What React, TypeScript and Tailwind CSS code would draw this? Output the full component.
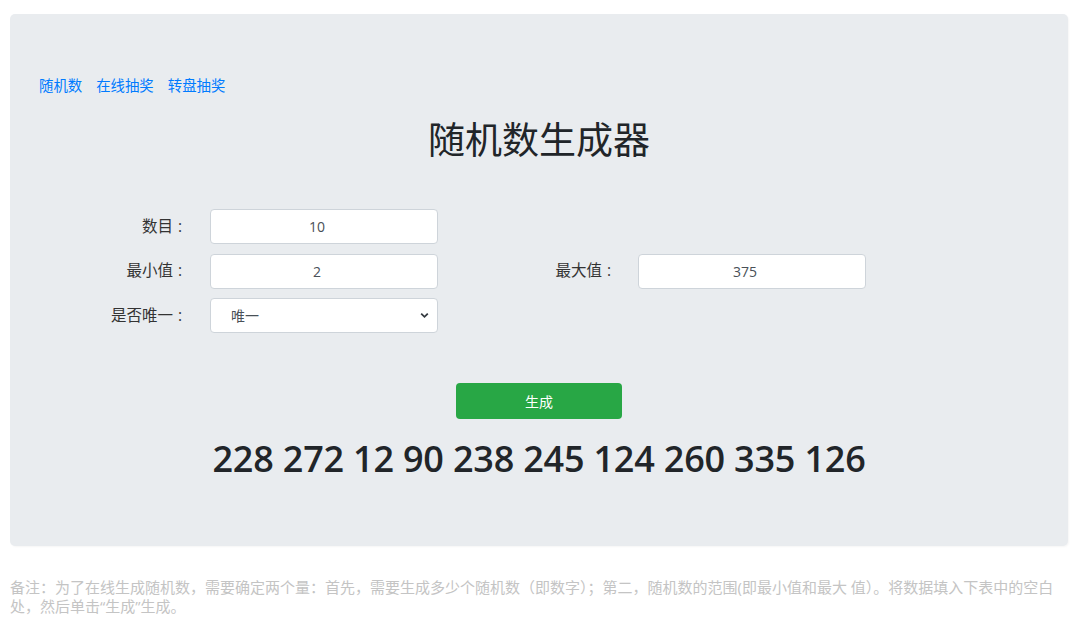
import React from 'react'

const font = { fontFamily: '"Open Sans", "Noto Sans CJK SC", sans-serif' }

const Field: React.FC<{ value: string }> = ({ value }) => (
  <input
    readOnly
    value={value}
    className="h-[35px] w-[228px] rounded-[4px] border border-[#ced4da] bg-white pr-[14px] text-center text-[14px] text-[#495057] outline-none"
  />
)

const Label: React.FC<{ text: string; w: string }> = ({ text, w }) => (
  <label className={`${w} text-right text-[15.5px] text-[#333]`}>
    {text}
    <span className="ml-[5px]">:</span>
  </label>
)

const App: React.FC = () => {
  const numbers = [228, 272, 12, 90, 238, 245, 124, 260, 335, 126]

  return (
    <div className="min-h-[629px] bg-white text-[#212529]" style={font}>
      <div className="pt-[14px] pl-[10px]">
        <div className="flex h-[532px] w-[1058px] flex-col rounded-[5px] bg-[#e9ecef] px-[29px] pt-[61px] shadow-[1px_1px_2px_rgba(0,0,0,0.04)]">
          {/* nav */}
          <div className="flex gap-[14px] text-[14.4px] leading-[22px] text-[#007bff]">
            <a>随机数</a>
            <a>在线抽奖</a>
            <a>转盘抽奖</a>
          </div>

          <h1 className="mt-[21px] text-center text-[37px] leading-[44px] font-normal">随机数生成器</h1>

          {/* form */}
          <div className="mt-[47px] flex flex-col gap-[9.5px]">
            <div className="flex items-center">
              <Label text="数目" w="w-[143px]" />
              <div className="ml-[28px]">
                <Field value="10" />
              </div>
            </div>
            <div className="flex items-center">
              <Label text="最小值" w="w-[143px]" />
              <div className="ml-[28px]">
                <Field value="2" />
              </div>
              <Label text="最大值" w="w-[173px]" />
              <div className="ml-[27px]">
                <Field value="375" />
              </div>
            </div>
            <div className="flex items-center">
              <Label text="是否唯一" w="w-[143px]" />
              <div className="relative ml-[28px]">
                <select className="h-[35px] w-[228px] appearance-none rounded-[4px] border border-[#ced4da] bg-white pl-[20px] text-[14px] text-[#495057] outline-none">
                  <option>唯一</option>
                  <option>不唯一</option>
                </select>
                <svg
                  className="pointer-events-none absolute right-[9px] top-[14px]"
                  width="9"
                  height="7"
                  viewBox="0 0 9 7"
                  fill="none"
                >
                  <path d="M1.2 1.6 L4.5 4.8 L7.8 1.6" stroke="#343a40" strokeWidth="1.8" />
                </svg>
              </div>
            </div>
          </div>

          <div className="mt-[50px] flex justify-center">
            <button className="h-[36px] w-[166px] rounded-[4px] bg-[#28a745] text-[14px] text-white">生成</button>
          </div>

          <div className="mt-[18px] text-center text-[36px] leading-[44px] font-semibold tracking-[-0.2px] text-[#212529]">
            {numbers.join(' ')}
          </div>
        </div>
      </div>

      <p className="mt-[32px] px-[10px] text-[15px] leading-[19px] text-[#c4c4c4]">
        备注：为了在线生成随机数，需要确定两个量：首先，需要生成多少个随机数（即数字）；第二，随机数的范围(即最小值和最大 值）。将数据填入下表中的空白处，然后单击“生成”生成。
      </p>
    </div>
  )
}

export default App
